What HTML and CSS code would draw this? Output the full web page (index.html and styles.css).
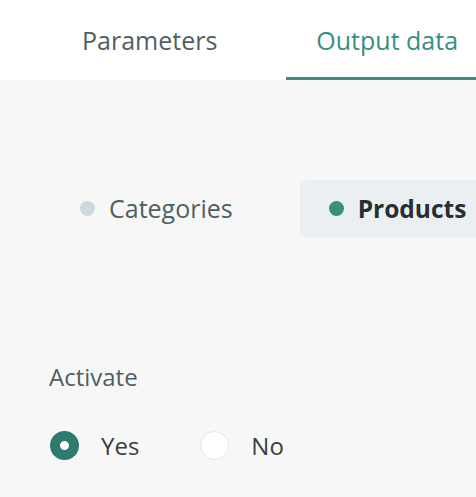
FILE: index.html
```html
<!DOCTYPE html>
<html>
<head>
<meta charset="utf-8">
<link rel="stylesheet" href="styles.css">
</head>
<body>
<div class="page">
  <nav class="tabs">
    <div class="tab">Parameters</div>
    <div class="tab active">Output data</div>
  </nav>
  <main class="content">
    <div class="segments">
      <div class="segment"><span class="dot"></span>Categories</div>
      <div class="segment selected"><span class="dot"></span>Products</div>
    </div>
    <div class="field">
      <div class="label">Activate</div>
      <div class="radios">
        <label class="radio checked"><span class="circle"></span>Yes</label>
        <label class="radio"><span class="circle"></span>No</label>
      </div>
    </div>
  </main>
</div>
</body>
</html>
```

FILE: styles.css
```css
* { box-sizing: border-box; }
html, body {
  margin: 0;
  padding: 0;
  width: 476px;
  height: 497px;
  overflow: hidden;
  background: #f7f7f7;
  font-family: "Open Sans", "Noto Sans", sans-serif;
}
.page {
  width: 476px;
  height: 497px;
  display: flex;
  flex-direction: column;
  overflow: hidden;
}
.tabs {
  display: flex;
  gap: 39px;
  padding-left: 52px;
  background: #ffffff;
  height: 80px;
  white-space: nowrap;
  overflow: hidden;
}
.tab {
  font-size: 25px;
  line-height: 34px;
  padding: 23px 30px 20px;
  border-bottom: 3px solid transparent;
  color: #4f5f62;
  flex: 0 0 auto;
}
.tab.active {
  color: #3a8e80;
  border-bottom-color: #3a8e80;
  padding-right: 20px;
}
.content {
  flex: 1;
  padding: 100px 0 0 0;
  overflow: hidden;
}
.segments {
  display: flex;
  gap: 37px;
  padding-left: 50px;
  white-space: nowrap;
  overflow: hidden;
}
.segment {
  display: flex;
  align-items: center;
  gap: 14px;
  padding: 12px 30px;
  font-size: 25px;
  line-height: 33px;
  color: #4f5f62;
  border-radius: 7px;
  flex: 0 0 auto;
}
.segment .dot {
  width: 15px;
  height: 15px;
  border-radius: 50%;
  background: #cfd8dc;
}
.segment.selected {
  background: #eceff1;
  color: #263033;
  font-weight: 700;
  font-size: 24.5px;
  padding-left: 29px;
}
.segment.selected .dot {
  background: #3a8e80;
}
.field {
  padding-left: 49px;
  margin-top: 123px;
}
.label {
  font-size: 24px;
  line-height: 33px;
  color: #4f5f62;
}
.radios {
  display: flex;
  gap: 61px;
  margin-top: 36px;
  padding-left: 1px;
}
.radio {
  display: flex;
  align-items: center;
  gap: 22px;
  font-size: 24px;
  line-height: 33px;
  color: #36403f;
}
.circle {
  width: 29px;
  height: 29px;
  border-radius: 50%;
  background: #ffffff;
  border: 1px solid #e3e6e8;
}
.radio.checked .circle {
  border: 10px solid #2f7a70;
}
```
